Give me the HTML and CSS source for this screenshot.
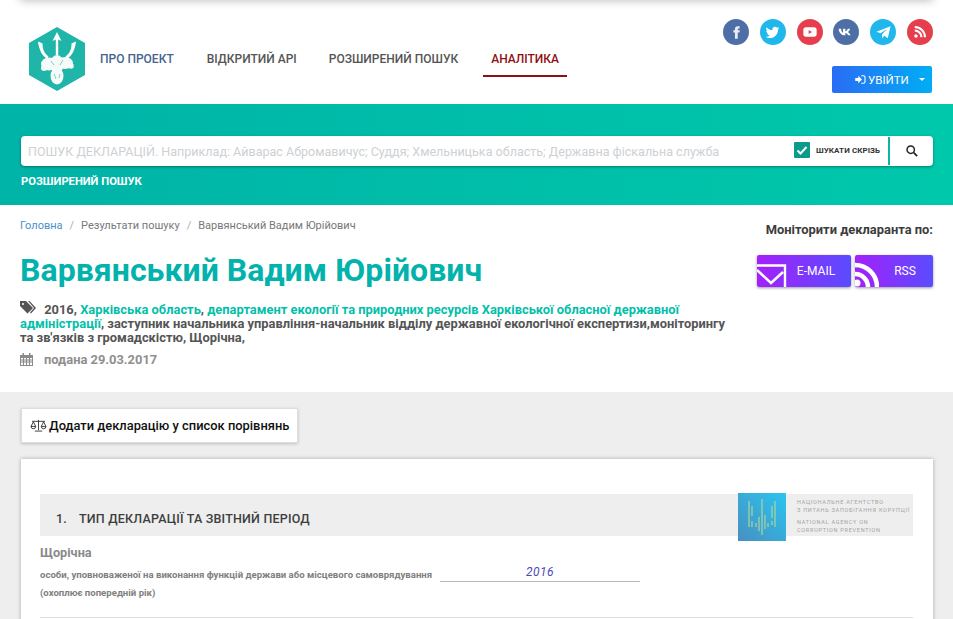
FILE: index.html
```html
<!DOCTYPE html>
<html lang="uk">
<head>
<meta charset="utf-8">
<title>Варвянський Вадим Юрійович</title>
<link rel="stylesheet" href="styles.css">
</head>
<body>
<div class="topstrip"></div>
<header class="header">
  <svg class="logo" viewBox="0 0 56 64" width="56" height="64">
    <polygon points="28,0 56,16 56,48 28,64 0,48 0,16" fill="#1fb5a8"/>
    <path d="M28 5l-4.500 9 3.300-1.500V28h2.400V12.500l3.300 1.500z" fill="#fff"/>
    <path d="M9 14.500l4.500 2c0 6 2 10 6 13l-1.500 2.500c-5-3.500-8-9-9-17.500zM47 14.500l-4.500 2c0 6-2 10-6 13l1.500 2.500c5-3.500 8-9 9-17.500z" fill="#fff"/>
    <g fill="#f6faf8">
      <ellipse cx="20" cy="37" rx="8" ry="6.500"/>
      <ellipse cx="36" cy="36" rx="8" ry="6"/>
      <ellipse cx="28" cy="37" rx="7" ry="9"/>
      <ellipse cx="28" cy="49" rx="6.500" ry="8.500"/>
      <circle cx="15" cy="41" r="3"/>
      <circle cx="42" cy="39" r="2.800"/>
    </g>
    <path d="M22 34l3 4M34 33l-3 5M25 47l2 5M31 47l-1 4" stroke="#1fb5a8" stroke-width=".6" fill="none"/>
  </svg>
  <nav class="nav">
    <a class="nav-item nav-blue">ПРО ПРОЕКТ</a>
    <a class="nav-item">ВІДКРИТИЙ АРІ</a>
    <a class="nav-item nav-wide">РОЗШИРЕНИЙ ПОШУК</a>
    <a class="nav-item nav-active">АНАЛІТИКА</a>
  </nav>
  <div class="header-right">
    <div class="socials">
      <span class="soc soc-blue"><svg viewBox="0 0 24 24" width="15" height="15"><path fill="#e8edf5" d="M14 8.500V6.600c0-.8.500-1 1-1h2V2h-3c-3 0-4.500 2-4.500 4.500v2H7V12h2.500v10H14V12h2.800l.5-3.500z"/></svg></span>
      <span class="soc soc-sky"><svg viewBox="0 0 24 24" width="15" height="15"><path fill="#fff" d="M23 5c-.8.400-1.700.600-2.600.700.900-.600 1.600-1.400 2-2.500-.9.500-1.900.900-2.900 1.100a4.500 4.500 0 0 0-7.700 4.100C8 8.200 4.700 6.400 2.500 3.700c-1.200 2-.6 4.700 1.400 6-.7 0-1.400-.2-2-.6 0 2.200 1.500 4.100 3.600 4.500-.7.200-1.400.2-2 .1.600 1.800 2.300 3.100 4.200 3.100A9 9 0 0 1 1 18.700 12.800 12.800 0 0 0 20.700 7.300c.9-.6 1.700-1.400 2.300-2.300z"/></svg></span>
      <span class="soc soc-red"><svg viewBox="0 0 24 24" width="16" height="16"><rect x="2" y="5" width="20" height="14" rx="4" fill="#fff"/><path d="M10 9v6l5-3z" fill="#e53e4d"/></svg></span>
      <span class="soc soc-blue"><svg viewBox="0 0 24 24" width="16" height="16"><path fill="#fff" d="M1 7h3.600c.3 3 1.500 5.500 3 6V7H11v3.800C12.500 10.500 14 9 14.700 7h3.400c-.5 2.300-2 4.100-3.400 5 1.500.8 3.200 2.300 4.200 5h-3.700c-.7-1.800-2.200-3.300-4.200-3.600V17h-.5C5 17 1.500 13 1 7z"/></svg></span>
      <span class="soc soc-sky"><svg viewBox="0 0 24 24" width="17" height="17"><path fill="#fff" d="M22 3L2 11l6 2.200L18 6.500l-8 8.100V20l3.300-3.500 4.700 3.500z"/></svg></span>
      <span class="soc soc-red"><svg viewBox="0 0 24 24" width="14" height="14"><circle cx="5" cy="19" r="3" fill="#fff"/><path d="M3 9.500A11.500 11.500 0 0 1 14.500 21M3 3.500A17.500 17.500 0 0 1 20.500 21" fill="none" stroke="#fff" stroke-width="3.600"/></svg></span>
    </div>
    <button class="login">
      <svg viewBox="0 0 14 12" width="11" height="9"><path fill="#fff" d="M0 4h4V1l5 5-5 5V8H0z"/><path fill="none" stroke="#fff" stroke-width="1.500" d="M8 1h3a2 2 0 0 1 2 2v6a2 2 0 0 1-2 2H8"/></svg>
      <span>УВІЙТИ</span>
      <i class="caret"></i>
    </button>
  </div>
</header>

<section class="hero">
  <div class="searchbar">
    <span class="placeholder">ПОШУК ДЕКЛАРАЦІЙ. Наприклад: Айварас Абромавичус; Суддя; Хмельницька область; Державна фіскальна служба</span>
    <span class="check"><svg viewBox="0 0 16 16" width="16" height="16"><path d="M3.500 8.500l3 3 6-6.500" fill="none" stroke="#fff" stroke-width="2"/></svg></span>
    <span class="check-label">ШУКАТИ СКРІЗЬ</span>
    <span class="search-btn"><svg viewBox="0 0 14 14" width="12" height="12"><circle cx="5.500" cy="5.500" r="4.300" fill="none" stroke="#222" stroke-width="1.700"/><path d="M9 9l4 4" stroke="#222" stroke-width="2"/></svg></span>
  </div>
  <a class="adv">РОЗШИРЕНИЙ ПОШУК</a>
</section>

<section class="profile">
  <div class="profile-main">
    <div class="crumbs"><a class="crumb-link">Головна</a><i>/</i><span>Результати пошуку</span><i>/</i><span>Варвянський Вадим Юрійович</span></div>
    <h1 class="name">Варвянський Вадим Юрійович</h1>
    <div class="tags">
      <svg class="tag-icon" viewBox="0 0 16 13" width="16" height="13"><path fill="#555" d="M0 0h6l7 7-5.500 5.500L0 5zM3 2a1 1 0 1 0 0 2 1 1 0 0 0 0-2z" fill-rule="evenodd"/><path fill="#555" d="M8 0h1.500l6.500 7-5 5.500-1-1L14 7z"/></svg>
      2016, <a>Харківська область</a>, <a>департамент екології та природних ресурсів Харківської обласної державної адміністрації</a>, заступник начальника управління-начальник відділу державної екологічної експертизи,моніторингу та зв'язків з громадскістю, Щорічна,
    </div>
    <div class="filed">
      <svg viewBox="0 0 13 13" width="13" height="13"><path fill="#8a8a8a" d="M0 2h2.500V0H4v2h5V0h1.500v2H13v11H0zM1 5v7h11V5z" fill-rule="evenodd"/><path stroke="#8a8a8a" stroke-width="1.100" d="M1 7h11M1 9h11M3.500 5v7M6.500 5v7M9.500 5v7"/></svg>
      <span>подана 29.03.2017</span>
    </div>
  </div>
  <aside class="monitor">
    <div class="monitor-title">Моніторити декларанта по:</div>
    <div class="monitor-btns">
      <a class="mon-btn mon-mail">
        <svg class="mon-icon" viewBox="0 0 30 24" width="30" height="24"><path d="M-4 2.500h32V24M0 7l14 13 12-11" fill="none" stroke="#fff" stroke-width="2.400"/></svg>
        E-MAIL
      </a>
      <a class="mon-btn mon-rss">
        <svg class="mon-icon" viewBox="0 0 24 33" width="24" height="33"><circle cx="2" cy="29" r="3.500" fill="#fff"/><path d="M0 20a13 13 0 0 1 13 13M0 11a22 22 0 0 1 22 22" fill="none" stroke="#fff" stroke-width="4.500"/></svg>
        RSS
      </a>
    </div>
  </aside>
</section>

<main class="content">
  <button class="compare">
    <svg viewBox="0 0 18 14" width="17" height="13"><path d="M9 1v11M5 13h8M2 2.500h14M3.500 3L1 8h5zM14.500 3L12 8h5zM1 8a2.500 2.500 0 0 0 5 0M12 8a2.500 2.500 0 0 0 5 0" fill="none" stroke="#222" stroke-width=".9"/></svg>
    Додати декларацію у список порівнянь
  </button>
  <article class="sheet">
    <div class="section-head">
      <h2 class="section-title"><span class="num">1.</span>ТИП ДЕКЛАРАЦІЇ ТА ЗВІТНИЙ ПЕРІОД</h2>
      <div class="nacp">
        <svg class="nacp-mark" viewBox="0 0 48 48" width="48" height="48">
          <defs><linearGradient id="nacpg" x1="1" y1="0" x2="0" y2="1"><stop offset="0" stop-color="#2bc4f0"/><stop offset="1" stop-color="#4790c0"/></linearGradient></defs>
          <rect width="48" height="48" fill="url(#nacpg)"/>
          <path d="M11 8v26M14 13v10M14 28v6M18 30v4M21 24v14M24 6v36M27 22v14M30 30v4M34 28v4M34 13v12M37 8v26" stroke="#b5d99a" stroke-width="1.100" fill="none"/>
        </svg>
        <div class="nacp-text">
          <div>НАЦІОНАЛЬНЕ АГЕНТСТВО</div>
          <div>З ПИТАНЬ ЗАПОБІГАННЯ КОРУПЦІЇ</div>
          <div class="nacp-gap">NATIONAL AGENCY ON</div>
          <div>CORRUPTION PREVENTION</div>
        </div>
      </div>
    </div>
    <div class="decl-type">Щорічна</div>
    <div class="decl-row">
      <span class="decl-note">особи, уповноваженої на виконання функцій держави або місцевого самоврядування</span>
      <span class="decl-year">2016</span>
    </div>
    <div class="decl-note decl-last">(охоплює попередній рік)</div>
    <div class="rule"></div>
  </article>
</main>
</body>
</html>
```
FILE: styles.css
```css
* { box-sizing: border-box; }
html, body { margin: 0; height: 619px; overflow: hidden; background: #fff; }
body { font-family: Roboto, "Liberation Sans", sans-serif; color: #444; position: relative; }
a { text-decoration: none; }

.topstrip { position: absolute; left: 20px; right: 20px; top: -10px; height: 10px; box-shadow: 0 0 10px rgba(0,0,0,.3); background: #fff; }

.header { height: 104px; display: flex; padding: 0 21px 0 29px; position: relative; }
.logo { margin-top: 27px; flex: none; }
.nav { display: flex; margin-left: 7px; margin-top: 42px; height: 35px; align-self: flex-start; }
.nav-item { font-size: 12px; font-weight: 500; color: #555; padding: 0 8px; margin-right: 16px; line-height: 35px; height: 35px; }
.nav-blue { color: #44648f; margin-right: 17px; }
.nav-wide { margin-right: 17px; }
.nav-active { color: #8e0f14; border-bottom: 2px solid #8e0f14; margin-right: 0; padding: 0 8px; width: 84px; }
.header-right { margin-left: auto; display: flex; flex-direction: column; align-items: flex-end; }
.socials { display: flex; gap: 10.800px; margin-top: 19px; margin-right: -1px; }
.soc { width: 26px; height: 26px; border-radius: 50%; display: flex; align-items: center; justify-content: center; }
.soc-blue { background: #4d6fa6; }
.soc-sky { background: #1fb7ec; }
.soc-red { background: #e53e4d; }
.login { margin-top: 21px; width: 100px; height: 27px; border: 0; border-radius: 2px; background: linear-gradient(90deg, #2a6cf5, #00aef4); color: #fff; font: 400 11.500px Roboto, sans-serif; display: flex; align-items: center; padding: 0 0 0 23px; }
.login svg { margin-right: 2px; }
.caret { margin-left: 10px; width: 0; height: 0; border-left: 3px solid transparent; border-right: 3px solid transparent; border-top: 3px solid #fff; }

.hero { height: 101px; background: linear-gradient(90deg, #00b3a7 0%, #00c8ab 100%); padding: 32px 20px 0 21px; }
.searchbar { height: 30px; background: #fff; border-radius: 4px; box-shadow: 0 1px 3px rgba(0,0,0,.35); display: flex; align-items: center; padding-left: 7px; }
.placeholder { font-size: 12.540px; color: #cdd1d4; white-space: nowrap; width: 766px; flex: none; overflow: hidden; }
.check { width: 16px; height: 16px; background: #0b9a8c; border-radius: 1px; flex: none; display: flex; margin-bottom: 2px; }
.check-label { font-size: 8px; font-weight: 700; color: #333; margin-left: 6px; margin-bottom: 2px; width: 72px; flex: none; white-space: nowrap; letter-spacing: .01em; }
.search-btn { width: 45px; height: 28px; border-left: 2px solid #0bb5a5; flex: none; display: flex; align-items: center; justify-content: center; }
.adv { display: block; margin-top: 9px; font-size: 11.200px; font-weight: 700; color: #fff; line-height: 13px; }

.profile { height: 187px; padding: 0 20px; display: flex; justify-content: space-between; }
.profile-main { width: 712px; }
.crumbs { margin-top: 14px; font-size: 11px; line-height: 13px; color: #777; display: flex; }
.crumbs i { font-style: normal; margin: 0 7px; color: #aaa; }
.crumb-link { color: #4a90c8; }
.name { margin: 19px 0 0; font-size: 32px; line-height: 38px; font-weight: 700; color: #02b2ac; letter-spacing: .04px; white-space: nowrap; }
.tags { margin-top: 12px; font-size: 12.880px; line-height: 14px; font-weight: 700; color: #555; }
.tags a { color: #02bfaa; }
.tag-icon { margin-right: 5px; vertical-align: 0; }
.filed { display: flex; align-items: center; margin-top: 7px; font-size: 12.900px; font-weight: 700; color: #8f8f8f; }
.filed span { margin-left: 11px; }
.monitor { width: 176px; }
.monitor-title { margin-top: 17px; font-size: 12.900px; line-height: 15px; font-weight: 700; color: #3c3c3c; text-align: right; white-space: nowrap; }
.monitor-btns { display: flex; gap: 4px; margin-top: 18px; }
.mon-btn { width: 94px; height: 32px; border-radius: 2px; background: linear-gradient(90deg, #a321fb, #5a4cff); box-shadow: 0 1px 3px rgba(0,0,0,.4); color: #fff; font-size: 12px; line-height: 32px; position: relative; overflow: hidden; text-align: center; padding-left: 24px; }
.mon-rss { width: 78px; padding-left: 22px; }
.mon-icon { position: absolute; left: 0; bottom: 0; }

.content { height: 227px; background: #eee; padding: 16px 20px 0 21px; overflow: hidden; }
.compare { width: 277px; height: 35px; background: #fff; border: 1px solid #ddd; box-shadow: 0 1px 3px rgba(0,0,0,.2); color: #111; font: 500 12.900px Roboto, sans-serif; display: flex; align-items: center; gap: 2px; padding: 0 0 0 8px; white-space: nowrap; }
.sheet { margin-top: 16px; width: 912px; height: 300px; background: #fff; box-shadow: 0 0 4px rgba(0,0,0,.3); padding: 35px 20px 0 19px; }
.section-head { height: 42px; background: #eee; display: flex; justify-content: space-between; }
.section-title { margin: 0; font-size: 12.500px; font-weight: 500; color: #3e3e3e; line-height: 16px; padding: 17px 0 0 16px; letter-spacing: .2px; }
.num { margin-right: 12px; }
.nacp { display: flex; margin-top: -1px; height: 48px; }
.nacp-mark { flex: none; }
.nacp-text { width: 127px; padding: 5px 0 0 11px; font-size: 5.500px; line-height: 8px; color: #a4a4a4; letter-spacing: .75px; white-space: nowrap; }
.nacp-gap { margin-top: 4px; }
.decl-type { margin-top: 9px; font-size: 12.700px; line-height: 16px; font-weight: 700; color: #8a8a8a; }
.decl-row { display: flex; align-items: flex-end; height: 21px; }
.decl-note { font-size: 9.600px; line-height: 13px; font-weight: 700; color: #7f7f7f; white-space: nowrap; }
.decl-row .decl-note { width: 400px; padding-bottom: 1px; }
.decl-year { width: 200px; height: 21px; border-bottom: 1px solid #bbb; text-align: center; font-size: 12px; line-height: 22px; font-style: italic; color: #4a4ab8; letter-spacing: .5px; }
.decl-last { margin-top: 4px; }
.rule { margin-top: 18px; height: 1px; background: #ddd; }
```
